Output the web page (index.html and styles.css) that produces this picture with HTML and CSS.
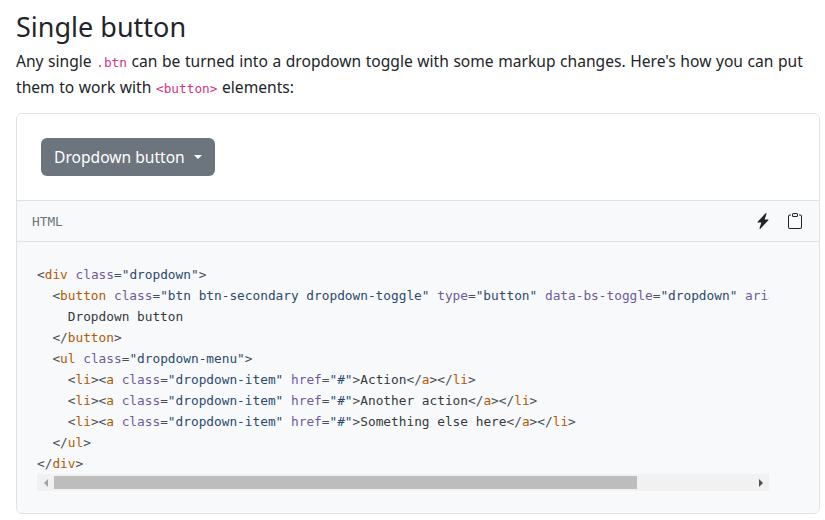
FILE: index.html
```html
<!DOCTYPE html>
<html lang="en">
<head>
<meta charset="utf-8">
<title>Single button</title>
<link rel="stylesheet" href="styles.css">
</head>
<body>
<main class="page">
  <h2 class="title">Single button</h2>
  <p class="lead">Any single <code class="inline">.btn</code> can be turned into a dropdown toggle with some markup changes. Here's how you can put them to work with <code class="inline">&lt;button&gt;</code> elements:</p>
  <section class="card">
    <div class="demo">
      <button class="btn" type="button">Dropdown button<span class="caret"></span></button>
    </div>
    <div class="bar">
      <span class="lang">HTML</span>
      <div class="tools">
        <svg class="icon" viewBox="0 0 16 16" width="16" height="16" fill="#212529"><path d="M11.251.068a.5.5 0 0 1 .227.58L9.677 6.5H13a.5.5 0 0 1 .364.843l-8 8.5a.5.5 0 0 1-.842-.49L6.323 9.5H3a.5.5 0 0 1-.364-.843l8-8.5a.5.5 0 0 1 .615-.09z"/></svg>
        <svg class="icon" viewBox="0 0 16 16" width="16" height="16" fill="#212529"><path d="M4 1.5H3a2 2 0 0 0-2 2V14a2 2 0 0 0 2 2h10a2 2 0 0 0 2-2V3.5a2 2 0 0 0-2-2h-1v1h1a1 1 0 0 1 1 1V14a1 1 0 0 1-1 1H3a1 1 0 0 1-1-1V3.5a1 1 0 0 1 1-1h1v-1z"/><path d="M9.5 1a.5.5 0 0 1 .5.5v1a.5.5 0 0 1-.5.5h-3a.5.5 0 0 1-.5-.5v-1a.5.5 0 0 1 .5-.5h3zm-3-1A1.5 1.5 0 0 0 5 1.5v1A1.5 1.5 0 0 0 6.5 4h3A1.5 1.5 0 0 0 11 2.5v-1A1.5 1.5 0 0 0 9.5 0h-3z"/></svg>
      </div>
    </div>
    <div class="source">
      <pre class="code"><span class="p">&lt;</span><span class="t">div</span> <span class="a">class</span><span class="p">=</span><span class="s">"dropdown"</span><span class="p">&gt;</span>
  <span class="p">&lt;</span><span class="t">button</span> <span class="a">class</span><span class="p">=</span><span class="s">"btn btn-secondary dropdown-toggle"</span> <span class="a">type</span><span class="p">=</span><span class="s">"button"</span> <span class="a">data-bs-toggle</span><span class="p">=</span><span class="s">"dropdown"</span> <span class="a">aria-expanded</span><span class="p">=</span><span class="s">"false"</span><span class="p">&gt;</span>
    Dropdown button
  <span class="p">&lt;/</span><span class="t">button</span><span class="p">&gt;</span>
  <span class="p">&lt;</span><span class="t">ul</span> <span class="a">class</span><span class="p">=</span><span class="s">"dropdown-menu"</span><span class="p">&gt;</span>
    <span class="p">&lt;</span><span class="t">li</span><span class="p">&gt;&lt;</span><span class="t">a</span> <span class="a">class</span><span class="p">=</span><span class="s">"dropdown-item"</span> <span class="a">href</span><span class="p">=</span><span class="s">"#"</span><span class="p">&gt;</span>Action<span class="p">&lt;/</span><span class="t">a</span><span class="p">&gt;&lt;/</span><span class="t">li</span><span class="p">&gt;</span>
    <span class="p">&lt;</span><span class="t">li</span><span class="p">&gt;&lt;</span><span class="t">a</span> <span class="a">class</span><span class="p">=</span><span class="s">"dropdown-item"</span> <span class="a">href</span><span class="p">=</span><span class="s">"#"</span><span class="p">&gt;</span>Another action<span class="p">&lt;/</span><span class="t">a</span><span class="p">&gt;&lt;/</span><span class="t">li</span><span class="p">&gt;</span>
    <span class="p">&lt;</span><span class="t">li</span><span class="p">&gt;&lt;</span><span class="t">a</span> <span class="a">class</span><span class="p">=</span><span class="s">"dropdown-item"</span> <span class="a">href</span><span class="p">=</span><span class="s">"#"</span><span class="p">&gt;</span>Something else here<span class="p">&lt;/</span><span class="t">a</span><span class="p">&gt;&lt;/</span><span class="t">li</span><span class="p">&gt;</span>
  <span class="p">&lt;/</span><span class="t">ul</span><span class="p">&gt;</span>
<span class="p">&lt;/</span><span class="t">div</span><span class="p">&gt;</span></pre>
      <div class="scrollbar">
        <span class="arrow arrow-left"></span>
        <div class="track"><div class="thumb"></div></div>
        <span class="arrow arrow-right"></span>
      </div>
    </div>
  </section>
</main>
</body>
</html>
```
FILE: styles.css
```css
* { box-sizing: border-box; }
html, body { margin: 0; padding: 0; background: #fff; }
body {
  width: 825px;
  height: 520px;
  overflow: hidden;
  font-family: "Noto Sans", sans-serif;
  color: #212529;
  font-size: 16px;
}
.page { padding: 8px 5px 0 16px; }
.title {
  margin: 0;
  font-size: 27px;
  font-weight: 400;
  line-height: 38px;
}
.lead {
  margin: 3px 0 12px;
  width: 795px;
  font-size: 15.6px;
  line-height: 25px;
  word-spacing: 0.5px;
}
.inline {
  font-family: "DejaVu Sans Mono", monospace;
  font-size: 12.79px;
  word-spacing: 0;
  color: #d63384;
}
.card {
  border: 1px solid #dee2e6;
  border-radius: 6px;
  height: 401px;
  overflow: hidden;
}
.demo { padding: 24px; height: 86px; background: #fff; }
.btn {
  display: flex;
  align-items: center;
  height: 38px;
  width: 174px;
  padding: 0 13px;
  border: 0;
  border-radius: 6px;
  background: #6c757d;
  color: #fff;
  font-family: "Noto Sans", sans-serif;
  font-size: 15.6px;
  white-space: nowrap;
}
.caret {
  margin-left: 9px;
  border-top: 4.8px solid #fff;
  border-left: 4.8px solid transparent;
  border-right: 4.8px solid transparent;
}
.bar {
  display: flex;
  align-items: center;
  justify-content: space-between;
  height: 42px;
  padding: 0 16px 0 15px;
  background: #f8f9fa;
  border-top: 1px solid #dee2e6;
  border-bottom: 1px solid #dee2e6;
}
.lang {
  font-family: "DejaVu Sans Mono", monospace;
  font-size: 12.79px;
  color: #6c757d;
}
.tools { display: flex; gap: 16px; }
.icon { display: block; }
.source {
  background: #f8f9fa;
  padding: 22px 50px 0 20px;
  height: 272px;
}
.code {
  margin: 0;
  overflow: hidden;
  font-family: "DejaVu Sans Mono", monospace;
  font-size: 12.79px;
  line-height: 21px;
  color: #343a40;
}
.t { color: #b35a00; }
.a { color: #6f5a9c; }
.s { color: #2a4a6e; }
.p { color: #495057; }
.scrollbar {
  display: flex;
  align-items: center;
  height: 17px;
  background: #f1f1f1;
}
.arrow { width: 17px; flex: none; display: flex; justify-content: center; }
.arrow-left::before, .arrow-right::before {
  content: "";
  border-top: 4px solid transparent;
  border-bottom: 4px solid transparent;
}
.arrow-left::before { border-right: 4px solid #a3a3a3; }
.arrow-right::before { border-left: 4px solid #505050; }
.track { flex: 1; height: 13px; }
.thumb { width: 583px; height: 13px; background: #bdbdbd; }
```
